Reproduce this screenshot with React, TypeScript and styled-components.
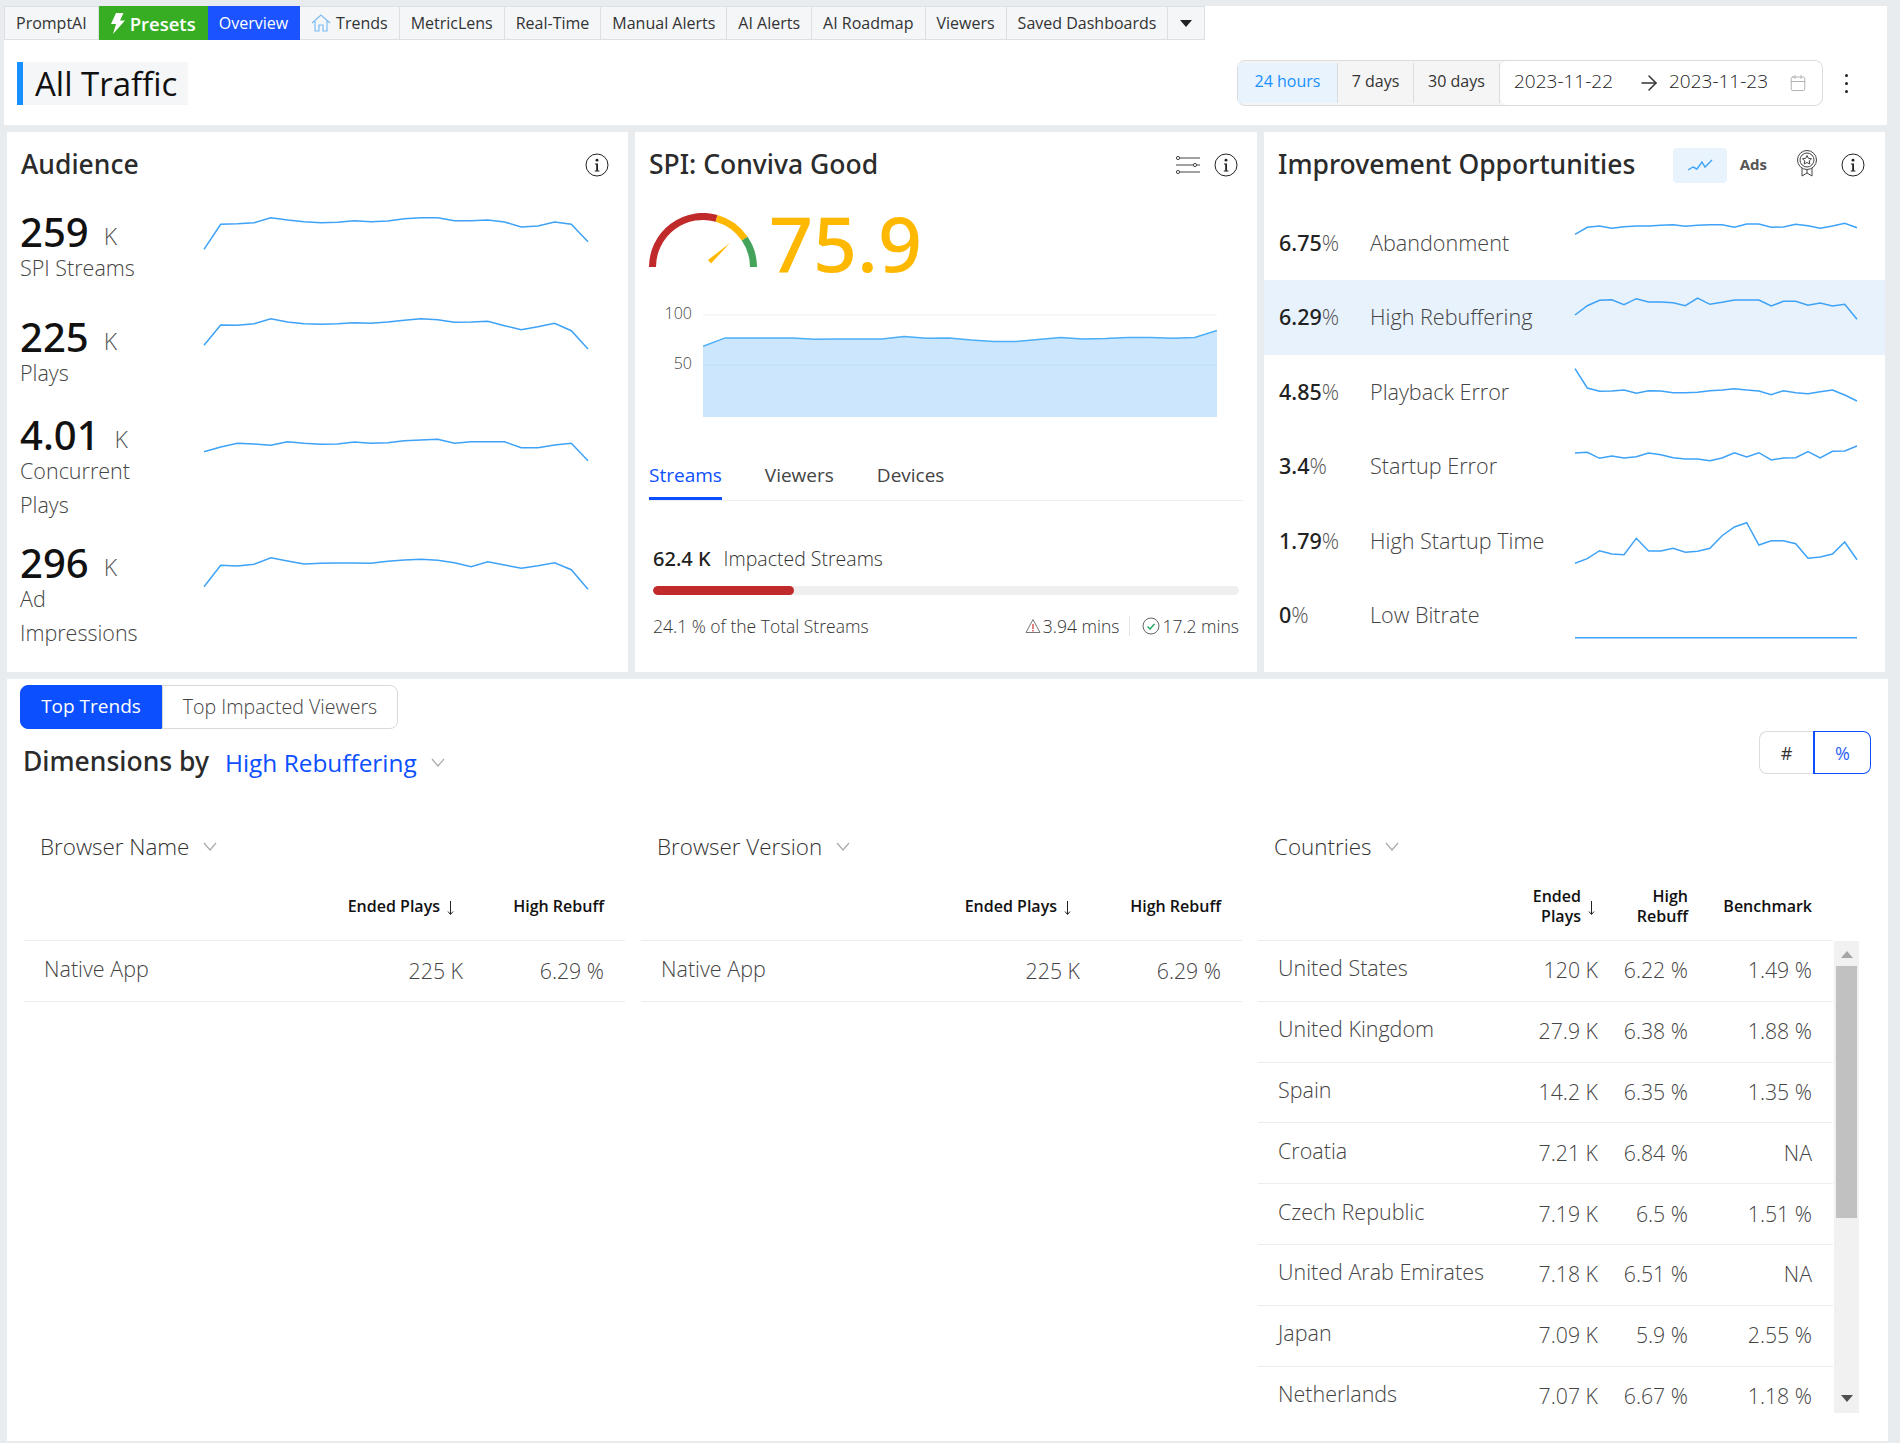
import React from "react";
import styled, { createGlobalStyle } from "styled-components";
import { ArrowRight, Calendar } from "lucide-react";

const FONT = `"Open Sans", "Noto Sans", sans-serif`;
const HEAD_FONT = `"Noto Sans", "Open Sans", sans-serif`;

const GlobalStyle = createGlobalStyle`
  html, body {
    margin: 0;
    padding: 0;
    background: #e8ecef;
    font-family: ${FONT};
    color: #333;
  }
  * { box-sizing: border-box; }
`;

// readings taken off the chart, in "3 units per pixel" with a per-row offset
const spark = (offset: number, ys: number[]) => ys.map((y) => y / 3 - offset);

const audience = [
  {
    value: "259",
    unit: "K",
    label: ["SPI Streams"],
    points: spark(208, [748, 673, 671, 668, 653, 660, 665, 668, 667, 662, 665, 663, 656, 653, 653, 662, 662, 660, 666, 681, 678, 666, 673, 725]),
  },
  {
    value: "225",
    unit: "K",
    label: ["Plays"],
    points: spark(313, [1036, 975, 976, 971, 956, 966, 971, 973, 971, 968, 970, 966, 961, 956, 959, 967, 966, 964, 977, 989, 980, 970, 992, 1047]),
  },
  {
    value: "4.01",
    unit: "K",
    label: ["Concurrent", "Plays"],
    points: spark(11, [155, 141, 130, 132, 136, 125, 130, 133, 132, 126, 130, 128, 122, 120, 118, 130, 125, 125, 125, 143, 143, 135, 130, 182]),
  },
  {
    value: "296",
    unit: "K",
    label: ["Ad", "Impressions"],
    points: spark(139, [560, 496, 498, 493, 473, 483, 492, 490, 489, 489, 490, 484, 480, 478, 481, 488, 500, 485, 495, 505, 497, 488, 509, 568]),
  },
];

const opportunities = [
  {
    value: "6.75",
    label: "Abandonment",
    points: spark(206, [703, 682, 678, 685, 680, 678, 678, 676, 674, 679, 676, 674, 674, 682, 672, 672, 682, 681, 673, 677, 685, 678, 670, 683]),
  },
  {
    value: "6.29",
    label: "High Rebuffering",
    active: true,
    points: spark(280, [945, 917, 901, 899, 914, 896, 906, 906, 908, 917, 894, 913, 907, 900, 900, 900, 918, 904, 904, 916, 909, 918, 913, 958]),
  },
  {
    value: "4.85",
    label: "Playback Error",
    points: spark(355, [1106, 1164, 1174, 1173, 1170, 1180, 1172, 1173, 1178, 1178, 1177, 1172, 1170, 1166, 1170, 1173, 1184, 1172, 1178, 1181, 1175, 1170, 1185, 1203]),
  },
  {
    value: "3.4",
    label: "Startup Error",
    points: spark(29, [159, 157, 175, 168, 174, 170, 159, 164, 173, 177, 177, 182, 174, 158, 171, 158, 180, 174, 173, 155, 174, 154, 153, 138]),
  },
  {
    value: "1.79",
    label: "High Startup Time",
    points: spark(103, [487, 473, 449, 459, 461, 412, 450, 450, 442, 454, 451, 442, 404, 378, 365, 432, 419, 419, 428, 472, 468, 459, 423, 476]),
  },
  {
    value: "0",
    label: "Low Bitrate",
    points: spark(178, new Array(24).fill(713)),
  },
];

const spiLine = [634, 610, 610, 610, 610, 614, 613, 613, 613, 606, 611, 610, 616, 620, 620, 615, 609, 613, 612, 609, 609, 611, 609, 589].map(
  (z) => z / 2.8 - 168
);

const countries = [
  ["United States", "120 K", "6.22 %", "1.49 %"],
  ["United Kingdom", "27.9 K", "6.38 %", "1.88 %"],
  ["Spain", "14.2 K", "6.35 %", "1.35 %"],
  ["Croatia", "7.21 K", "6.84 %", "NA"],
  ["Czech Republic", "7.19 K", "6.5 %", "1.51 %"],
  ["United Arab Emirates", "7.18 K", "6.51 %", "NA"],
  ["Japan", "7.09 K", "5.9 %", "2.55 %"],
  ["Netherlands", "7.07 K", "6.67 %", "1.18 %"],
];

function Sparkline({ points, width, height }: { points: number[]; width: number; height: number }) {
  const step = width / (points.length - 1);
  return (
    <SparkSvg width={width} height={height} viewBox={`0 0 ${width} ${height}`}>
      <polyline
        points={points.map((y, i) => `${(i * step).toFixed(1)},${y.toFixed(1)}`).join(" ")}
        fill="none"
        stroke="#3ea2f7"
        strokeWidth="1.5"
      />
    </SparkSvg>
  );
}

function InfoIcon() {
  return (
    <svg width="24" height="24" viewBox="0 0 24 24" fill="none">
      <circle cx="12" cy="12" r="11" stroke="#222" strokeWidth="1" />
      <circle cx="12" cy="7.2" r="1.4" fill="#222" />
      <path d="M10 10.4h3v7h1.4v1h-4.6v-1H11.2v-6H10z" fill="#222" />
    </svg>
  );
}

function Chevron() {
  return (
    <ChevronSvg width="14" height="9" viewBox="0 0 14 9" fill="none">
      <polyline points="1,1 7,8 13,1" stroke="#aaa" strokeWidth="1.2" />
    </ChevronSvg>
  );
}

function SortArrow() {
  return (
    <SortSvg width="9" height="14" viewBox="0 0 9 14" fill="none" stroke="#222" strokeWidth="1">
      <path d="M4.500 0v13M2 10.500l2.500 3 2.500-3" />
    </SortSvg>
  );
}

function Gauge() {
  return (
    <svg width="108" height="54" viewBox="0 0 108 54" fill="none">
      <path d="M3.500 54A50.500 50.500 0 0 1 67.600 5.300" stroke="#c12a2a" strokeWidth="7" />
      <path d="M67.600 5.300A50.500 50.500 0 0 1 95.700 25.600" stroke="#ffb800" strokeWidth="7" />
      <path d="M95.700 25.600A50.500 50.500 0 0 1 104.500 54" stroke="#43a35a" strokeWidth="7" />
      <path d="M59 47L81 30L62 50.500Z" fill="#ffb800" />
    </svg>
  );
}

function SimpleTable({ title }: { title: string }) {
  return (
    <TableColumn>
      <Selector>
        {title}
        <Chevron />
      </Selector>
      <SimpleRow $head>
        <span />
        <HeadCell $arrowGap={8}>
          Ended Plays
          <SortArrow />
        </HeadCell>
        <HeadCell>High Rebuff</HeadCell>
      </SimpleRow>
      <SimpleRow>
        <NameCell>Native App</NameCell>
        <ValueCell>225 K</ValueCell>
        <ValueCell>6.29 %</ValueCell>
      </SimpleRow>
    </TableColumn>
  );
}

export default function App() {
  const tabs = ["MetricLens", "Real-Time", "Manual Alerts", "AI Alerts", "AI Roadmap", "Viewers", "Saved Dashboards"];
  return (
    <>
      <GlobalStyle />
      <Page>
        <Header>
          <TabBar>
            <Tab>PromptAI</Tab>
            <Tab $bg="#36ad22" $color="#fff" $large>
              <svg width="15" height="21" viewBox="0 0 15 21" fill="#fff">
                <path d="M6 0h7.500L10 7.500h5L3 21l3-10H1z" />
              </svg>
              Presets
            </Tab>
            <Tab $bg="#1a53ff" $color="#fff">Overview</Tab>
            <Tab>
              <svg width="20" height="20" viewBox="0 0 20 20" fill="none" stroke="#7cbcf3" strokeWidth="1.2">
                <path d="M1 10L10 2l9 8M4 8v10h4v-6h4v6h4V8" />
              </svg>
              Trends
            </Tab>
            {tabs.map((t) => (
              <Tab key={t}>{t}</Tab>
            ))}
            <Tab $tight>
              <Caret />
            </Tab>
          </TabBar>
          <TitleRow>
            <PageTitle>All Traffic</PageTitle>
            <DateBox>
              <RangeCell $active $width={100}>24 hours</RangeCell>
              <RangeCell $width={76}>7 days</RangeCell>
              <RangeCell $width={86}>30 days</RangeCell>
              <DateRange>
                <span>2023-11-22</span>
                <RangeArrow>
                  <ArrowRight size={24} strokeWidth={1.5} color="#333" />
                </RangeArrow>
                <span>2023-11-23</span>
                <RangeCalendar>
                  <Calendar size={18} strokeWidth={1.2} color="#aaa" />
                </RangeCalendar>
              </DateRange>
            </DateBox>
            <Kebab>
              <i />
              <i />
              <i />
            </Kebab>
          </TitleRow>
        </Header>

        <Cards>
          <Card>
            <CardHead>
              <CardTitle>Audience</CardTitle>
              <InfoIcon />
            </CardHead>
            <AudienceList>
              {audience.map((m) => (
                <AudienceRow key={m.value}>
                  <div>
                    <BigNumber>
                      {m.value}
                      <Unit>{m.unit}</Unit>
                    </BigNumber>
                    {m.label.map((l) => (
                      <MetricLabel key={l}>{l}</MetricLabel>
                    ))}
                  </div>
                  <Sparkline points={m.points} width={384} height={60} />
                </AudienceRow>
              ))}
            </AudienceList>
          </Card>

          <Card>
            <CardHead>
              <CardTitle>SPI: Conviva Good</CardTitle>
              <HeadIcons>
                <svg width="24" height="20" viewBox="0 0 24 20" fill="none" stroke="#444" strokeWidth="1">
                  <path d="M4 3h20M0 10h17M21 10h3M4 17h20" />
                  <circle cx="2" cy="3" r="1.6" />
                  <circle cx="19" cy="10" r="1.6" />
                  <circle cx="2" cy="17" r="1.6" />
                </svg>
                <InfoIcon />
              </HeadIcons>
            </CardHead>
            <SpiBody>
              <ScoreRow>
                <Gauge />
                <Score>75.9</Score>
              </ScoreRow>
              <ChartRow>
                <Axis>
                  <span>100</span>
                  <span>50</span>
                </Axis>
                <svg width="514" height="132" viewBox="0 0 514 132">
                  <line x1="0" x2="514" y1="27" y2="27" stroke="#eeeeee" />
                  <polygon
                    points={`0,129 ${spiLine.map((y, i) => `${((i * 514) / 23).toFixed(1)},${y.toFixed(1)}`).join(" ")} 514,129`}
                    fill="#cce7fd"
                  />
                  <line x1="0" x2="514" y1="77" y2="77" stroke="#bcdcf5" />
                  <polyline
                    points={spiLine.map((y, i) => `${((i * 514) / 23).toFixed(1)},${y.toFixed(1)}`).join(" ")}
                    fill="none"
                    stroke="#4aaef8"
                    strokeWidth="1.5"
                  />
                </svg>
              </ChartRow>
              <SpiTabs>
                <SpiTab $active>Streams</SpiTab>
                <SpiTab>Viewers</SpiTab>
                <SpiTab>Devices</SpiTab>
              </SpiTabs>
              <Impact>
                <ImpactLine>
                  <strong>62.4 K</strong>
                  <span>Impacted Streams</span>
                </ImpactLine>
                <Track>
                  <Fill style={{ width: "24.1%" }} />
                </Track>
                <ImpactFoot>
                  <span>24.1 % of the Total Streams</span>
                  <Durations>
                    <svg width="16" height="16" viewBox="0 0 16 16" fill="none">
                      <path d="M8 1.500L15 14.500H1z" stroke="#777" strokeLinejoin="round" />
                      <path d="M8 6v5M8 12v1.500" stroke="#d62a2a" strokeWidth="1.2" />
                    </svg>
                    <span>3.94 mins</span>
                    <Divider />
                    <svg width="18" height="18" viewBox="0 0 18 18" fill="none">
                      <circle cx="9" cy="9" r="8" stroke="#666" />
                      <path d="M5.500 9.500L8 12l4.500-5" stroke="#17a85a" strokeWidth="1.3" />
                    </svg>
                    <span>17.2 mins</span>
                  </Durations>
                </ImpactFoot>
              </Impact>
            </SpiBody>
          </Card>

          <Card>
            <CardHead $tight>
              <CardTitle>Improvement Opportunities</CardTitle>
              <HeadIcons $gap={0}>
                <ModeButton>
                  <svg width="26" height="14" viewBox="0 0 26 14" fill="none" stroke="#3ea2f7" strokeWidth="1.4">
                    <path d="M1 11l5-3 4 2 5-7 3 5 7-7" />
                  </svg>
                </ModeButton>
                <AdsLabel>Ads</AdsLabel>
                <AwardSlot>
                  <svg width="22" height="27" viewBox="0 0 22 27" fill="none" stroke="#444" strokeWidth="1">
                    <circle cx="11" cy="10" r="9.500" />
                    <circle cx="11" cy="10" r="7" />
                    <path d="M11 5.500l1.400 2.900 3.100.4-2.300 2.100.6 3.100-2.800-1.500-2.800 1.500.6-3.100-2.300-2.100 3.100-.4z" />
                    <path d="M6 18v8l5-3 5 3v-8M11 20v3" />
                  </svg>
                </AwardSlot>
                <InfoIcon />
              </HeadIcons>
            </CardHead>
            <OppList>
              {opportunities.map((o) => (
                <OppRow key={o.label} $active={o.active}>
                  <OppValue>
                    {o.value}
                    <span>%</span>
                  </OppValue>
                  <OppLabel>{o.label}</OppLabel>
                  <Sparkline points={o.points} width={282} height={74} />
                </OppRow>
              ))}
            </OppList>
          </Card>
        </Cards>

        <Panel>
          <Segments>
            <Segment $active>Top Trends</Segment>
            <Segment>Top Impacted Viewers</Segment>
          </Segments>
          <DimensionRow>
            <DimensionTitle>Dimensions by</DimensionTitle>
            <DimensionPick>High Rebuffering</DimensionPick>
            <Chevron />
            <Toggle>
              <ToggleItem>#</ToggleItem>
              <ToggleItem $active>%</ToggleItem>
            </Toggle>
          </DimensionRow>
          <Tables>
            <SimpleTable title="Browser Name" />
            <SimpleTable title="Browser Version" />
            <TableColumn>
              <Selector>
                Countries
                <Chevron />
              </Selector>
              <CountryHead>
                <span />
                <HeadCell $arrowGap={2}>
                  <span>
                    Ended
                    <br />
                    Plays
                  </span>
                  <SortArrow />
                </HeadCell>
                <HeadCell>
                  High
                  <br />
                  Rebuff
                </HeadCell>
                <HeadCell>Benchmark</HeadCell>
              </CountryHead>
              <ScrollArea>
                <CountryList>
                  {countries.map((c) => (
                    <CountryRow key={c[0]}>
                      <NameCell>{c[0]}</NameCell>
                      <ValueCell>{c[1]}</ValueCell>
                      <ValueCell>{c[2]}</ValueCell>
                      <ValueCell>{c[3]}</ValueCell>
                    </CountryRow>
                  ))}
                </CountryList>
                <Scrollbar>
                  <ScrollUp />
                  <Thumb />
                  <ScrollDown />
                </Scrollbar>
              </ScrollArea>
            </TableColumn>
          </Tables>
        </Panel>
      </Page>
    </>
  );
}

const Page = styled.div`
  width: 1900px;
  height: 1443px;
  padding-top: 6px;
  overflow: hidden;
`;

const Header = styled.header`
  width: 1883px;
  height: 119px;
  margin-left: 4px;
  background: #fff;
`;

const TabBar = styled.nav`
  display: flex;
  height: 34px;
`;

const Tab = styled.div<{ $bg?: string; $color?: string; $large?: boolean; $tight?: boolean }>`
  display: flex;
  align-items: center;
  gap: 5px;
  padding: 0 ${(p) => (p.$tight ? 8 : 11)}px;
  background: ${(p) => p.$bg || "#f4f6f8"};
  color: ${(p) => p.$color || "#333"};
  border: 1px solid ${(p) => p.$bg || "#dcdfe3"};
  border-left: ${(p) => (p.$bg ? "0" : "none")};
  font-size: ${(p) => (p.$large ? "18.500px" : "16px")};
  font-weight: ${(p) => (p.$large ? 600 : 400)};
  white-space: nowrap;

  &:first-child {
    border-left: 1px solid #dcdfe3;
  }
`;

const Caret = styled.span`
  width: 0;
  height: 0;
  margin: 0 4px;
  border-left: 6px solid transparent;
  border-right: 6px solid transparent;
  border-top: 7px solid #222;
`;

const TitleRow = styled.div`
  display: flex;
  align-items: center;
  height: 46px;
  margin-top: 20px;
  padding: 0 18px 0 13px;
`;

const PageTitle = styled.h1`
  margin: 0;
  height: 43px;
  padding: 0 11px 0 12px;
  background: #f5f6f7;
  border-left: 6px solid #1890ff;
  font-size: 33px;
  font-weight: 400;
  line-height: 43px;
  color: #111;
`;

const DateBox = styled.div`
  display: flex;
  align-items: stretch;
  width: 586px;
  height: 46px;
  margin-left: auto;
  background: #f5f5f5;
  border: 1px solid #dcdcdc;
  border-radius: 8px;
  padding: 2px 0;
`;

const RangeCell = styled.div<{ $active?: boolean; $width: number }>`
  display: flex;
  align-items: center;
  justify-content: center;
  width: ${(p) => p.$width}px;
  padding-bottom: 4px;
  background: ${(p) => (p.$active ? "#e8f3fe" : "transparent")};
  color: ${(p) => (p.$active ? "#1890ff" : "#333")};
  border-right: 1px solid #dcdcdc;
  font-size: 16px;
`;

const DateRange = styled.div`
  flex: 1;
  display: flex;
  align-items: center;
  padding: 0 15px 4px 14px;
  margin: -2px 0;
  background: #fff;
  border-radius: 8px;
  font-size: 19px;
  font-weight: 300;
  color: #222;
`;

const RangeArrow = styled.span`
  display: flex;
  margin: 4px 8px 0 24px;
`;

const RangeCalendar = styled.span`
  display: flex;
  margin: 4px 0 0 auto;
`;

const Kebab = styled.div`
  display: flex;
  flex-direction: column;
  align-items: center;
  gap: 5px;
  width: 46px;

  i {
    width: 3px;
    height: 3px;
    border-radius: 50%;
    background: #222;
  }
`;

const Cards = styled.div`
  display: grid;
  grid-template-columns: 621px 622px 621px;
  gap: 7px;
  height: 540px;
  margin: 7px 0 0 7px;
`;

const Card = styled.section`
  background: #fff;
  overflow: hidden;
`;

const CardHead = styled.div<{ $tight?: boolean }>`
  display: flex;
  align-items: center;
  justify-content: space-between;
  height: 66px;
  padding: 0 ${(p) => (p.$tight ? 20 : 19)}px 0 14px;
`;

const CardTitle = styled.h2`
  margin: -2px 0 0;
  font-family: ${HEAD_FONT};
  font-size: 26.500px;
  font-weight: 500;
  color: #2b2b2b;
  white-space: nowrap;
`;

const HeadIcons = styled.div<{ $gap?: number }>`
  display: flex;
  align-items: center;
  gap: ${(p) => p.$gap ?? 14}px;
`;

const AudienceList = styled.div`
  display: grid;
  grid-template-rows: 105px 98px 128px 1fr;
  margin-top: 10px;
  padding-left: 13px;
`;

const AudienceRow = styled.div`
  display: grid;
  grid-template-columns: 184px 384px;
`;

const SparkSvg = styled.svg`
  display: block;
  overflow: visible;
`;

const BigNumber = styled.div`
  height: 43px;
  font-family: ${HEAD_FONT};
  font-size: 40px;
  font-weight: 500;
  line-height: 48px;
  color: #111;
`;

const Unit = styled.span`
  margin-left: 15px;
  font-family: ${FONT};
  font-size: 23px;
  font-weight: 300;
  color: #555;
  vertical-align: 2px;
`;

const MetricLabel = styled.div`
  font-size: 21.500px;
  font-weight: 300;
  line-height: 34px;
  color: #444;
`;

const SpiBody = styled.div`
  padding: 15px 14px 0;
`;

const ScoreRow = styled.div`
  display: flex;
  align-items: flex-start;
  gap: 12px;
  height: 60px;
`;

const Score = styled.div`
  font-family: ${HEAD_FONT};
  font-size: 77px;
  font-weight: 500;
  line-height: 60px;
  color: #ffb800;
`;

const ChartRow = styled.div`
  display: flex;
  gap: 11px;
  margin-top: 15px;
`;

const Axis = styled.div`
  display: flex;
  flex-direction: column;
  width: 43px;
  font-size: 16px;
  font-weight: 300;
  color: #444;
  text-align: right;

  span {
    line-height: 50px;
  }
`;

const SpiTabs = styled.div`
  display: flex;
  gap: 43px;
  margin-top: 33px;
  border-bottom: 1px solid #eeeeee;
`;

const SpiTab = styled.div<{ $active?: boolean }>`
  height: 47px;
  font-size: 19px;
  line-height: 44px;
  color: ${(p) => (p.$active ? "#0b4fff" : "#444")};
  border-bottom: 3px solid ${(p) => (p.$active ? "#0b4fff" : "transparent")};
`;

const Impact = styled.div`
  padding: 42px 4px 0;
`;

const ImpactLine = styled.div`
  display: flex;
  align-items: center;
  gap: 13px;
  height: 30px;
  font-size: 19.500px;
  font-weight: 300;
  color: #333;

  strong {
    font-family: ${HEAD_FONT};
    font-size: 20px;
    font-weight: 500;
    color: #222;
  }
`;

const Track = styled.div`
  height: 9px;
  margin-top: 13px;
  background: #efefef;
  border-radius: 5px;
  overflow: hidden;
`;

const Fill = styled.div`
  height: 100%;
  background: #c12a2a;
  border-radius: 5px;
`;

const ImpactFoot = styled.div`
  display: flex;
  align-items: center;
  justify-content: space-between;
  height: 24px;
  margin-top: 19px;
  font-size: 17.500px;
  font-weight: 300;
  color: #333;
`;

const Durations = styled.div`
  display: flex;
  align-items: center;
  gap: 2px;
`;

const Divider = styled.span`
  width: 1px;
  height: 20px;
  margin: 0 10px 0 8px;
  background: #e4e4e4;
`;

const ModeButton = styled.div`
  display: flex;
  align-items: center;
  justify-content: center;
  width: 54px;
  height: 35px;
  margin-top: 1px;
  background: #e8f3fe;
  border-radius: 4px;
`;

const AdsLabel = styled.span`
  margin: -3px 0 0 13px;
  font-size: 15px;
  font-weight: 700;
  color: #555;
`;

const AwardSlot = styled.div`
  display: flex;
  margin: -3px 23px 0 29px;
`;

const OppList = styled.div`
  display: grid;
  grid-auto-rows: 74.4px;
  margin-top: 8px;
`;

const OppRow = styled.div<{ $active?: boolean }>`
  display: grid;
  grid-template-columns: 91px 205px 282px;
  align-items: start;
  padding-left: 15px;
  background: ${(p) => (p.$active ? "#e8f2fc" : "transparent")};
`;

const OppValue = styled.div`
  font-family: ${HEAD_FONT};
  font-size: 21.500px;
  font-weight: 500;
  line-height: 74px;
  color: #222;

  span {
    font-family: ${FONT};
    font-weight: 300;
    color: #555;
  }
`;

const OppLabel = styled.div`
  font-size: 21.600px;
  font-weight: 300;
  line-height: 74px;
  color: #444;
  white-space: nowrap;
`;

const Panel = styled.section`
  width: 1881px;
  height: 762px;
  margin: 7px 0 0 7px;
  padding: 6px 0 0 13px;
  background: #fff;
`;

const Segments = styled.div`
  display: flex;
  height: 44px;
`;

const Segment = styled.div<{ $active?: boolean }>`
  display: flex;
  align-items: center;
  justify-content: center;
  width: ${(p) => (p.$active ? 142 : 236)}px;
  padding-bottom: 2px;
  background: ${(p) => (p.$active ? "#0b4fff" : "#fff")};
  color: ${(p) => (p.$active ? "#fff" : "#444")};
  border: 1px solid ${(p) => (p.$active ? "#0b4fff" : "#d9d9d9")};
  border-radius: ${(p) => (p.$active ? "8px 0 0 8px" : "0 8px 8px 0")};
  font-size: ${(p) => (p.$active ? 19 : 19.6)}px;
  font-weight: ${(p) => (p.$active ? 400 : 300)};
`;

const DimensionRow = styled.div`
  display: flex;
  align-items: center;
  height: 62px;
  margin-top: 2px;
  padding: 0 17px 0 3px;
`;

const DimensionTitle = styled.h3`
  margin: -3px 0 0;
  font-family: ${HEAD_FONT};
  font-size: 26.500px;
  font-weight: 500;
  color: #2b2b2b;
`;

const DimensionPick = styled.span`
  margin: 0 0 0 16px;
  font-size: 24.400px;
  font-weight: 400;
  color: #0b4fff;
`;

const Toggle = styled.div`
  display: flex;
  align-self: flex-start;
  margin-left: auto;
  height: 43px;
`;

const ToggleItem = styled.div<{ $active?: boolean }>`
  display: flex;
  align-items: center;
  justify-content: center;
  width: ${(p) => (p.$active ? 58 : 54)}px;
  color: ${(p) => (p.$active ? "#2a62f5" : "#333")};
  font-size: 18px;
  border: 1px solid ${(p) => (p.$active ? "#0b4fff" : "#dcdcdc")};
  border-left: ${(p) => (p.$active ? "2px solid #0b4fff" : "1px solid #dcdcdc")};
  border-right: ${(p) => (p.$active ? "1px solid #0b4fff" : "none")};
  border-radius: ${(p) => (p.$active ? "0 8px 8px 0" : "8px 0 0 8px")};
`;

const ChevronSvg = styled.svg`
  flex: none;
  margin-left: 14px;
`;

const Tables = styled.div`
  display: grid;
  grid-template-columns: 601px 601px 601px;
  gap: 16px;
  padding-left: 4px;
`;

const TableColumn = styled.div`
  min-width: 0;
`;

const Selector = styled.div`
  display: flex;
  align-items: center;
  height: 36px;
  margin-top: 35px;
  padding-left: 16px;
  font-size: 22.400px;
  font-weight: 300;
  color: #333;
`;

const SimpleRow = styled.div<{ $head?: boolean }>`
  display: grid;
  grid-template-columns: 1fr 120px 141px;
  align-items: center;
  height: ${(p) => (p.$head ? 77 : 61)}px;
  padding: ${(p) => (p.$head ? "7px 21px 0 0" : "0 21px 2px 0")};
  border-bottom: 1px solid #ededed;
`;

const HeadCell = styled.div<{ $arrowGap?: number }>`
  display: flex;
  justify-content: flex-end;
  align-items: center;
  gap: 6px;
  font-size: 16px;
  font-weight: 600;
  line-height: 20px;
  color: #111;
  text-align: right;
  white-space: nowrap;
  margin-right: ${(p) => p.$arrowGap ?? 0}px;
`;

const SortSvg = styled.svg`
  flex: none;
  margin-top: 4px;
`;

const NameCell = styled.div`
  padding: 0 0 4px 20px;
  font-size: 21.500px;
  font-weight: 300;
  color: #444;
  white-space: nowrap;
`;

const ValueCell = styled.div`
  font-size: 21.300px;
  font-weight: 300;
  color: #444;
  text-align: right;
  white-space: nowrap;
`;

const CountryHead = styled.div`
  display: grid;
  grid-template-columns: 1fr 100px 90px 124px;
  align-items: center;
  width: 575px;
  height: 77px;
  padding: 7px 21px 0 0;
  border-bottom: 1px solid #ededed;
`;

const ScrollArea = styled.div`
  display: flex;
  height: 473px;
`;

const CountryList = styled.div`
  width: 575px;
  overflow: hidden;
`;

const CountryRow = styled.div`
  display: grid;
  grid-template-columns: 1fr 100px 90px 124px;
  align-items: center;
  height: 60.800px;
  padding: 0 21px 2px 0;
  border-bottom: 1px solid #ededed;
`;

const Scrollbar = styled.div`
  display: flex;
  flex-direction: column;
  align-items: center;
  width: 25px;
  height: 472px;
  margin-left: 1px;
  background: #f1f1f1;
`;

const ScrollUp = styled.span`
  width: 0;
  height: 0;
  margin: 10px 0 8px;
  border-left: 6px solid transparent;
  border-right: 6px solid transparent;
  border-bottom: 7px solid #a6a6a6;
`;

const Thumb = styled.div`
  width: 21px;
  height: 252px;
  background: #c1c1c1;
`;

const ScrollDown = styled.span`
  width: 0;
  height: 0;
  margin-top: auto;
  margin-bottom: 11px;
  border-left: 6px solid transparent;
  border-right: 6px solid transparent;
  border-top: 7px solid #505050;
`;
